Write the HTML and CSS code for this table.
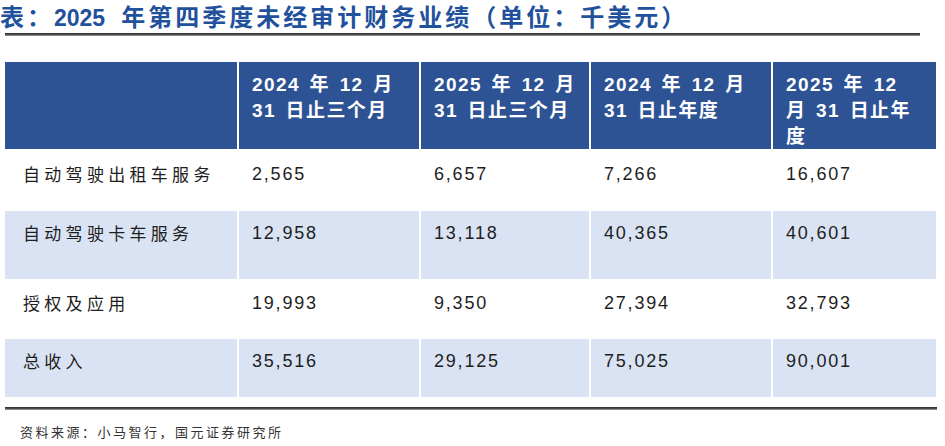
FILE: index.html
```html
<!DOCTYPE html>
<html lang="zh-CN">
<head>
<meta charset="utf-8">
<title>2025 年第四季度未经审计财务业绩</title>
<link rel="stylesheet" href="styles.css">
</head>
<body>
<div class="page">
  <h1 class="title">表：<span class="yr">2025</span>年第四季度未经审计财务业绩（单位：千美元）</h1>
  <div class="rule rule-top"></div>

  <div class="fin-table">
    <div class="cell head first"></div>
    <div class="cell head">2024 年 12 月<br>31 日止三个月</div>
    <div class="cell head">2025 年 12 月<br>31 日止三个月</div>
    <div class="cell head">2024 年 12 月<br>31 日止年度</div>
    <div class="cell head">2025 年 12<br>月 31 日止年<br>度</div>

    <div class="cell label r1">自动驾驶出租车服务</div>
    <div class="cell num r1">2,565</div>
    <div class="cell num r1">6,657</div>
    <div class="cell num r1">7,266</div>
    <div class="cell num r1">16,607</div>

    <div class="cell label alt r2">自动驾驶卡车服务</div>
    <div class="cell num alt r2">12,958</div>
    <div class="cell num alt r2">13,118</div>
    <div class="cell num alt r2">40,365</div>
    <div class="cell num alt r2">40,601</div>

    <div class="cell label r3">授权及应用</div>
    <div class="cell num r3">19,993</div>
    <div class="cell num r3">9,350</div>
    <div class="cell num r3">27,394</div>
    <div class="cell num r3">32,793</div>

    <div class="cell label alt r4">总收入</div>
    <div class="cell num alt r4">35,516</div>
    <div class="cell num alt r4">29,125</div>
    <div class="cell num alt r4">75,025</div>
    <div class="cell num alt r4">90,001</div>
  </div>

  <div class="rule rule-bottom"></div>
  <p class="source">资料来源：小马智行，国元证券研究所</p>
</div>
</body>
</html>
```

FILE: styles.css
```css
html, body {
  margin: 0;
  padding: 0;
  background: #ffffff;
}

body {
  font-family: "Liberation Sans", "Noto Sans CJK SC", sans-serif;
  color: #1a1a1a;
}

.page {
  width: 945px;
  height: 446px;
  overflow: hidden;
}

.title {
  margin: 0;
  height: 33px;
  font-family: "Noto Sans CJK SC", sans-serif;
  font-size: 24px;
  font-weight: 700;
  line-height: 32px;
  letter-spacing: 3px;
  color: #1f519c;
  white-space: nowrap;
}

.title .yr {
  font-family: "Liberation Sans", sans-serif;
  font-size: 23px;
  letter-spacing: 0;
  margin-right: 16px;
}

.rule {
  margin-left: 5px;
  height: 3px;
}

.rule-top {
  width: 915px;
  background: linear-gradient(to bottom, #2b2b2b 0%, #555 60%, #aaa 100%);
}

.rule-bottom {
  width: 932px;
  margin-top: 10px;
  background: linear-gradient(to bottom, #2b2b2b 0%, #555 60%, #aaa 100%);
}

.fin-table {
  margin: 26px 0 0 5px;
  display: grid;
  grid-template-columns: 232px 180px 168px 180px 163px;
  grid-template-rows: 87px 58px 68px 56px 58px;
  gap: 2px;
  width: 931px;
}

.cell {
  box-sizing: border-box;
  padding: 10px 0 0 13px;
  white-space: nowrap;
}

.head {
  background: #2e5395;
  color: #ffffff;
  font-weight: 700;
  font-size: 19px;
  line-height: 26px;
  letter-spacing: 1.4px;
  word-spacing: 3px;
  padding-top: 10px;
}

.label {
  font-family: "Noto Sans CJK SC", sans-serif;
  font-size: 17px;
  line-height: 24px;
  letter-spacing: 4.3px;
  padding-left: 18px;
  color: #1e1e1e;
}

.num {
  font-size: 18px;
  line-height: 24px;
  letter-spacing: 1.8px;
  color: #1e1e1e;
}

.r1 { padding-top: 11px; }

.alt {
  background: #dae3f3;
}

.source {
  margin: 13px 0 0 20px;
  font-family: "Noto Sans CJK SC", sans-serif;
  font-size: 13px;
  line-height: 18px;
  letter-spacing: 2.5px;
  color: #333333;
}
```
